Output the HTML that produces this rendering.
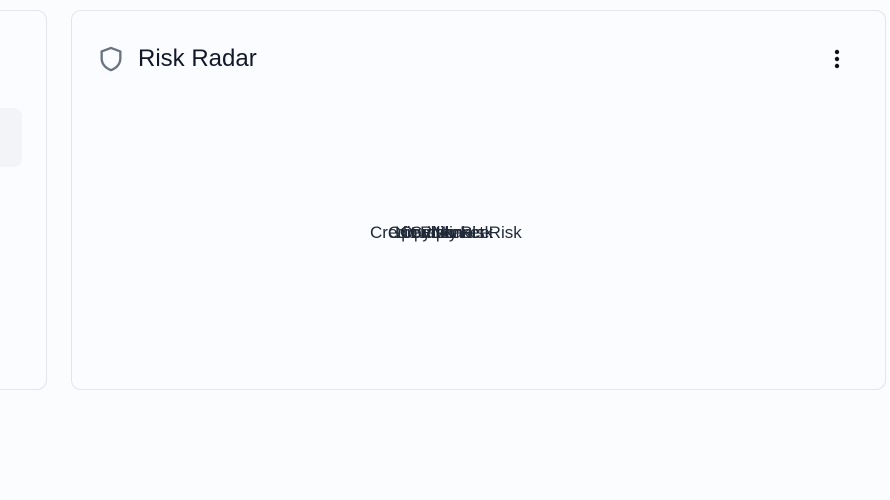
<!DOCTYPE html>
<html><head><style>
html,body{margin:0;padding:0;width:890px;height:500px;background:#fbfcfe;font-family:"Liberation Sans",sans-serif;overflow:hidden;position:relative}
.card{position:absolute;border:1px solid #e3e5ea;border-radius:10px;background:#fbfcff;box-sizing:border-box}
.lbl{position:absolute;top:223px;font-size:17px;color:#1f2937;white-space:nowrap;}
</style></head><body>
<div class="card" style="left:-20px;top:10px;width:67px;height:380px">
  <div style="position:absolute;left:0;top:97px;width:41px;height:59px;background:#f3f4f7;border-radius:8px"></div>
</div>
<div class="card" style="left:71px;top:10px;width:815px;height:380px"></div>
<svg style="position:absolute;left:97px;top:44px" width="28" height="30" viewBox="0 0 24 24" fill="none" stroke="#6b7280" stroke-width="2" stroke-linejoin="round"><path d="M12 2.5l8 3v6c0 5-3.5 8.5-8 10-4.5-1.5-8-5-8-10v-6z"/></svg>
<div style="position:absolute;left:138px;top:45px;font-size:24px;color:#111827">Risk Radar</div>
<svg style="position:absolute;left:832px;top:49px" width="10" height="22"><circle cx="5" cy="3" r="2.2" fill="#111"/><circle cx="5" cy="10" r="2.2" fill="#111"/><circle cx="5" cy="17" r="2.2" fill="#111"/></svg>
<div class="lbl" style="left:370px">Credit Risk</div>
<div class="lbl" style="left:432px">Market Risk</div>
<div class="lbl" style="left:388px">Operational</div>
<div class="lbl" style="left:410px">Cyber Risk</div>
<div class="lbl" style="left:395px">Liquidity</div>
<div class="lbl" style="left:400px">Compliance</div>
</body></html>
